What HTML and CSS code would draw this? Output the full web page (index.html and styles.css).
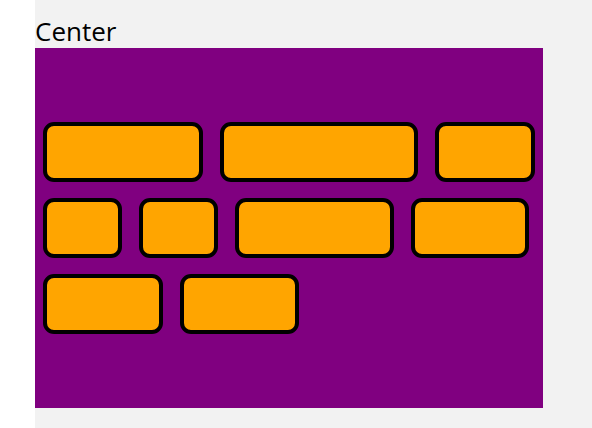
FILE: index.html
```html
<!DOCTYPE html>
<html>
<head>
<meta charset="utf-8">
<link rel="stylesheet" href="styles.css">
</head>
<body>
<div class="page">
  <div class="title">Center</div>
  <div class="panel">
    <div class="item w160"></div>
    <div class="item w198"></div>
    <div class="item w100"></div>
    <div class="item w79"></div>
    <div class="item w79"></div>
    <div class="item w159"></div>
    <div class="item w118"></div>
    <div class="item w120"></div>
    <div class="item w119"></div>
  </div>
</div>
</body>
</html>
```
FILE: styles.css
```css
html, body {
  margin: 0;
  padding: 0;
  background: #ffffff;
}
.page {
  margin-left: 35px;
  height: 428px;
  background: #f2f2f2;
  display: flex;
  flex-direction: column;
}
.title {
  font-family: "Open Sans", "Noto Sans", sans-serif;
  font-size: 26px;
  line-height: 1;
  height: 48px;
  color: #000;
  box-sizing: border-box;
  display: flex;
  align-items: flex-end;
  padding-bottom: 4px;
}
.panel {
  width: 508px;
  height: 360px;
  background: #800080;
  box-sizing: border-box;
  padding: 0 8px;
  display: flex;
  flex-wrap: wrap;
  align-content: center;
  justify-content: flex-start;
  column-gap: 17px;
  row-gap: 16px;
}
.item {
  height: 60px;
  box-sizing: border-box;
  background: #ffa500;
  border: 4px solid #000;
  border-radius: 11px;
}
.w79 { width: 79px; }
.w100 { width: 100px; }
.w118 { width: 118px; }
.w119 { width: 119px; }
.w120 { width: 120px; }
.w159 { width: 159px; }
.w160 { width: 160px; }
.w198 { width: 198px; }
```
